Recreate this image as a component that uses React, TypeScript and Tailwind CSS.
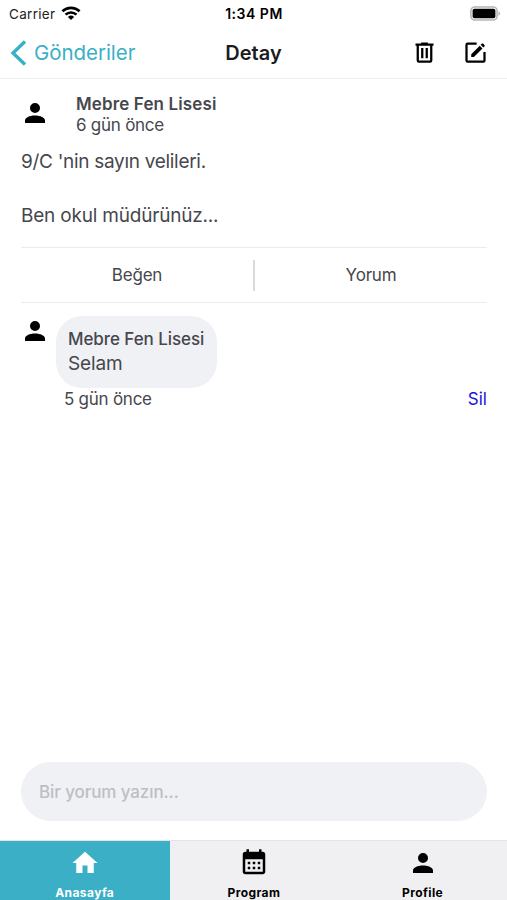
import React from 'react';

interface IconProps {
  path: string;
  className?: string;
}

// Material Community glyphs on a 24x24 grid
const paths = {
  account:
    'M12,4A4,4 0 0,1 16,8A4,4 0 0,1 12,12A4,4 0 0,1 8,8A4,4 0 0,1 12,4M12,14C16.42,14 20,15.79 20,18V20H4V18C4,15.79 7.58,14 12,14Z',
  home: 'M10,20V14H14V20H19V12H22L12,3L2,12H5V20H10Z',
  calendar:
    'M7 11H9V13H7V11M21 5V19C21 20.11 20.11 21 19 21H5C3.89 21 3 20.1 3 19V5C3 3.9 3.9 3 5 3H6V1H8V3H16V1H18V3H19C20.11 3 21 3.9 21 5M19 19V9H5V19H19M15 13V11H17V13H15M11 13V11H13V13H11M7 15H9V17H7V15M15 17V15H17V17H15M11 17V15H13V17H11Z',
  trash:
    'M9,3V4H4V6H5V19A2,2 0 0,0 7,21H17A2,2 0 0,0 19,19V6H20V4H15V3H9M7,6H17V19H7V6M9,8V17H11V8H9M13,8V17H15V8H13Z',
};

const Icon: React.FC<IconProps> = ({ path, className }) => (
  <svg viewBox="0 0 24 24" fill="currentColor" className={className}>
    <path d={path} />
  </svg>
);

const StatusBar: React.FC = () => (
  <div className="flex h-[27px] items-center justify-between pl-[9px] pr-[6px] text-black">
    <div className="flex w-[120px] items-center gap-[6px]">
      <span className="text-[13.5px] leading-4 tracking-[0.3px] text-[#222]">Carrier</span>
      <svg viewBox="0 0 20 15" className="mt-[-1px] h-[15px] w-5" fill="none" stroke="currentColor">
        <path d="M1.4 5.3A12.4 12.4 0 0 1 18.6 5.3" strokeWidth="2.6" />
        <path d="M4.5 8.7A8 8 0 0 1 15.5 8.7" strokeWidth="2.5" />
        <path d="M10 14L6.9 10.9A4.5 4.5 0 0 1 13.1 10.9Z" fill="currentColor" stroke="none" />
      </svg>
    </div>
    <span className="text-[14px] font-semibold leading-4 tracking-[0.5px]">1:34 PM</span>
    <div className="flex w-[122px] justify-end">
      <svg viewBox="0 0 31 15" className="h-[15px] w-[31px]">
        <rect x="0.9" y="1" width="26.2" height="13" rx="4" fill="none" stroke="#b5b5b5" strokeWidth="1.6" />
        <rect x="2.6" y="2.8" width="22.8" height="9.4" rx="1.8" fill="#000" />
        <path d="M28.5 5.3Q30.2 6 30.2 7.5T28.5 9.7Z" fill="#b5b5b5" />
      </svg>
    </div>
  </div>
);

const Header: React.FC = () => (
  <header className="grid h-[52px] grid-cols-3 items-center border-b border-[#f0f0f2]">
    <button className="flex items-center gap-[7px] pl-[10px] text-[#3aafc5]">
      <svg viewBox="0 0 17 26" className="h-[26px] w-[17px]" fill="none" stroke="currentColor" strokeWidth="3.4">
        <path d="M15 1.5L3 13L15 24.5" />
      </svg>
      <span className="text-[20.5px] leading-6 tracking-[-0.05px]">Gönderiler</span>
    </button>
    <h1 className="text-center text-[20px] font-semibold leading-6 text-[#1c1c1e]">Detay</h1>
    <div className="flex items-center justify-end gap-6 pr-[18.5px] text-black">
      <Icon path={paths.trash} className="size-[27px]" />
      <svg viewBox="0 0 24 24" className="size-[27px]" fill="currentColor">
        <path d="M13 3V5H5V19H19V11.5H21V19A2 2 0 0 1 19 21H5A2 2 0 0 1 3 19V5A2 2 0 0 1 5 3Z" />
        <path d="M8.2 13.6L15.8 6L18.2 8.4L10.6 16H8.2ZM16.6 5.2L17.7 4.1Q18.2 3.7 18.7 4.1L20.1 5.5Q20.5 6 20.1 6.5L19 7.6Z" />
      </svg>
    </div>
  </header>
);

const Comment: React.FC = () => (
  <div className="flex pt-3">
    <Icon path={paths.account} className="ml-[-1px] mt-px size-[30px] text-black" />
    <div className="ml-[6px] flex-1">
      <div className="mt-px h-[72px] w-[161px] rounded-[26px] bg-[#eff1f5] pl-3 pt-[11px]">
        <p className="text-[17px] font-medium leading-[25px] tracking-[-0.07px]">Mebre Fen Lisesi</p>
        <p className="text-[19px] leading-6 tracking-[-0.15px]">Selam</p>
      </div>
      <div className="flex justify-between pl-2 text-[17px] leading-[22px]">
        <span className="tracking-[-0.25px]">5 gün önce</span>
        <button className="text-[#1c10dc]">Sil</button>
      </div>
    </div>
  </div>
);

const tabs = [
  { label: 'Anasayfa', icon: paths.home, active: true },
  { label: 'Program', icon: paths.calendar, active: false },
  { label: 'Profile', icon: paths.account, active: false },
];

const TabBar: React.FC = () => (
  <nav className="grid h-[60px] grid-cols-[169.5px_1fr_1fr] border-t border-[#e4e4e6] bg-[#f0f0f2]">
    {tabs.map((tab) => (
      <button
        key={tab.label}
        className={`flex flex-col items-center pt-[6.5px] ${tab.active ? 'bg-[#3aafc5] text-white' : 'text-black'}`}
      >
        <Icon path={tab.icon} className="size-[30px]" />
        <span className="mt-[7.5px] text-[12px] font-bold leading-4 tracking-[0.4px]">{tab.label}</span>
      </button>
    ))}
  </nav>
);

const App: React.FC = () => {
  return (
    <div className="flex h-screen flex-col overflow-hidden bg-white font-['Inter',sans-serif] text-[#46474d]">
      <StatusBar />
      <Header />

      <main className="flex flex-1 flex-col pl-[21px] pr-5">
        {/* Post author */}
        <div className="flex pt-[15px]">
          <Icon path={paths.account} className="ml-[-1px] mt-1 size-[30px] text-black" />
          <div className="ml-[26px]">
            <p className="text-[17px] font-semibold leading-[21px] tracking-[0.13px]">Mebre Fen Lisesi</p>
            <p className="text-[17px] leading-[21px] tracking-[-0.25px]">6 gün önce</p>
          </div>
        </div>

        <div className="mt-3 text-[19px] leading-[27px]">
          <p className="tracking-[-0.3px]">9/C 'nin sayın velileri.</p>
          <br />
          <p className="tracking-[-0.2px]">Ben okul müdürünüz...</p>
        </div>

        {/* Like / comment actions */}
        <div className="mt-[18px] flex h-14 items-center border-y border-[#e9ebee] text-[17px] tracking-[-0.2px]">
          <button className="flex-1 pt-[2px]">Beğen</button>
          <div className="h-[31px] w-[2px] bg-[#d7dade]" />
          <button className="flex-1 pt-[2px]">Yorum</button>
        </div>

        <Comment />

        <div className="mb-[19px] mt-auto flex h-[59px] items-center rounded-full bg-[#eff1f5] pl-[18px] pt-[2px] text-[17px] font-medium tracking-[-0.1px] text-[#bdbec3]">
          Bir yorum yazın...
        </div>
      </main>

      <TabBar />
    </div>
  );
};

export default App;
